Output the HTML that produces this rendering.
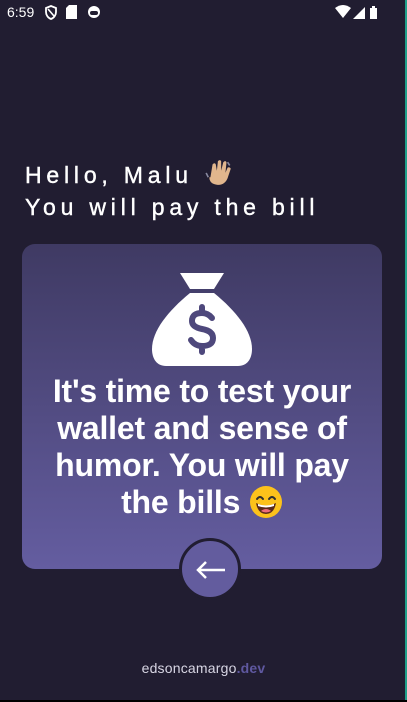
<!DOCTYPE html>
<html><head><meta charset="utf-8"><style>
*{margin:0;padding:0;box-sizing:border-box}
html,body{width:407px;height:702px;overflow:hidden;background:#211d31;font-family:"Liberation Sans",sans-serif;color:#fff}
.sb{position:absolute;top:0;left:0;width:407px;height:26px}
.time{position:absolute;left:7px;top:4px;font-size:14px;color:#fff}
.g{position:absolute;left:25px;font-size:23px;letter-spacing:4.8px;color:#fff;white-space:nowrap;-webkit-text-stroke:0.4px #fff}
.card{position:absolute;left:22px;top:244px;width:360px;height:325px;border-radius:13px;background:linear-gradient(#3f3a63,#645da0)}
.txt{position:absolute;left:22px;top:373px;width:360px;text-align:center;font-weight:bold;font-size:32px;line-height:37px;white-space:nowrap;letter-spacing:-0.2px}
.btn{position:absolute;left:179px;top:538px;width:62px;height:62px;border-radius:50%;background:#635c9e;border:3px solid #211d31}
.foot{position:absolute;top:660px;width:407px;text-align:center;font-size:14px;color:#d8d6e4;letter-spacing:0.2px}
.foot b{color:#5f58a0}
</style></head><body>
<div class="sb">
<div class="time">6:59</div>
<svg style="position:absolute;left:44px;top:5px" width="14" height="15" viewBox="0 0 14 15"><path d="M7 1L2 3v4c0 3 2 6 5 7 3-1 5-4 5-7V3z" fill="none" stroke="#fff" stroke-width="1.8"/><path d="M4 4l6 7" stroke="#fff" stroke-width="1.6"/></svg>
<svg style="position:absolute;left:66px;top:5px" width="11" height="14"><path d="M3 0h8v14H0V3z" fill="#fff"/></svg>
<svg style="position:absolute;left:87px;top:5px" width="14" height="14"><circle cx="7" cy="7" r="6" fill="#fff"/><rect x="3" y="6" width="8" height="4" rx="2" fill="#211d31"/></svg>
<svg style="position:absolute;left:335px;top:5px" width="45" height="15"><path d="M0 3q8-6 16 0l-8 10z" fill="#fff"/><path d="M18 14L30 2v12z" fill="#fff"/><rect x="35" y="3" width="7" height="11" fill="#fff"/><rect x="37" y="1" width="3" height="2" fill="#fff"/></svg>
</div>
<div style="position:absolute;right:0;top:0;width:2px;height:700px;background:#1fa08a"></div>
<div style="position:absolute;left:0;bottom:0;width:407px;height:2px;background:#000"></div>
<div class="g" style="top:160px">Hello, Malu <svg width="30" height="28" viewBox="0 0 28 26" style="vertical-align:-5px"><path d="M6 16l2-12q2-2 3 0l1 6 1-9q2-2 3 0v9l2-8q2-2 3 0l-1 10 2-5q2-1 3 1l-3 9q-3 7-10 6-7-1-7-7z" fill="#e1b68d"/><path d="M2 12l2 4M22 2l2 3" stroke="#8a8aa0" stroke-width="1.5"/></svg></div>
<div class="g" style="top:194px">You will pay the bill</div>
<div class="card"></div>
<svg style="position:absolute;left:152px;top:267px" width="100" height="100" viewBox="0 0 100 100"><path d="M28 6h44l-10 16H38z" fill="#fff"/><path d="M38 26h24c22 18 38 38 38 56 0 10-5 17-14 17H14C5 99 0 92 0 82 0 64 16 44 38 26z" fill="#fff"/><path d="M60 51q-4-5-10-5-10 0-10 8 0 6 10 8 11 2 11 9 0 8-11 8-7 0-11-6M50 40v6M50 79v6" fill="none" stroke="#4e487c" stroke-width="6" stroke-linecap="round"/></svg>
<div class="txt">It's time to test your<br>wallet and sense of<br>humor. You will pay<br>the bills <svg width="34" height="34" viewBox="0 0 34 34" style="vertical-align:-6px"><circle cx="17" cy="17" r="16" fill="#fcc21b"/><path d="M8 14q3-4 6 0M20 14q3-4 6 0" stroke="#2f2f2f" stroke-width="2" fill="none" stroke-linecap="round"/><path d="M7 18q10 5 20 0q-2 11-10 11T7 18z" fill="#5a2a1a"/><path d="M9 19q8 3 16 0v2q-8 3-16 0z" fill="#fff"/><path d="M12 26q5-4 10 0q-5 3-10 0z" fill="#ed6c7a"/></svg></div>
<div class="btn"><svg style="position:absolute;left:14px;top:17px" width="30" height="24" viewBox="0 0 30 24"><path d="M2 12h27M10 4l-8 8 8 8" fill="none" stroke="#fff" stroke-width="2.5"/></svg></div>
<div class="foot">edsoncamargo<b>.dev</b></div>
</body></html>
